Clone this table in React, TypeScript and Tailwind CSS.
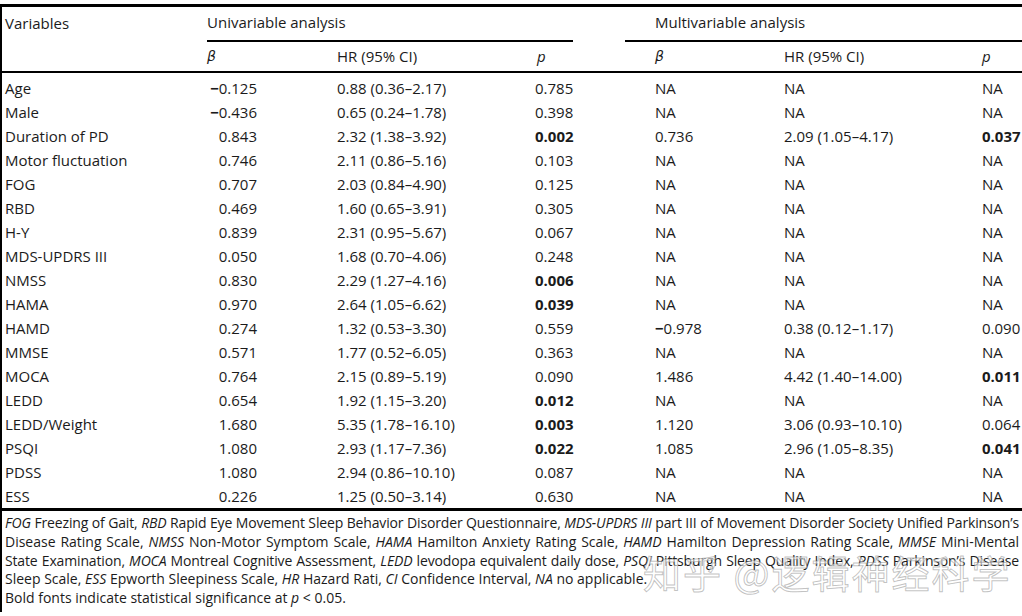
import React from "react";

type Row = {
  name: string;
  ub: string;
  uhr: string;
  up: string;
  upBold?: boolean;
  mb: string;
  mhr: string;
  mp: string;
  mpBold?: boolean;
};

const rows: Row[] = [
  { name: "Age", ub: "−0.125", uhr: "0.88 (0.36–2.17)", up: "0.785", mb: "NA", mhr: "NA", mp: "NA" },
  { name: "Male", ub: "−0.436", uhr: "0.65 (0.24–1.78)", up: "0.398", mb: "NA", mhr: "NA", mp: "NA" },
  { name: "Duration of PD", ub: "0.843", uhr: "2.32 (1.38–3.92)", up: "0.002", upBold: true, mb: "0.736", mhr: "2.09 (1.05–4.17)", mp: "0.037", mpBold: true },
  { name: "Motor fluctuation", ub: "0.746", uhr: "2.11 (0.86–5.16)", up: "0.103", mb: "NA", mhr: "NA", mp: "NA" },
  { name: "FOG", ub: "0.707", uhr: "2.03 (0.84–4.90)", up: "0.125", mb: "NA", mhr: "NA", mp: "NA" },
  { name: "RBD", ub: "0.469", uhr: "1.60 (0.65–3.91)", up: "0.305", mb: "NA", mhr: "NA", mp: "NA" },
  { name: "H-Y", ub: "0.839", uhr: "2.31 (0.95–5.67)", up: "0.067", mb: "NA", mhr: "NA", mp: "NA" },
  { name: "MDS-UPDRS III", ub: "0.050", uhr: "1.68 (0.70–4.06)", up: "0.248", mb: "NA", mhr: "NA", mp: "NA" },
  { name: "NMSS", ub: "0.830", uhr: "2.29 (1.27–4.16)", up: "0.006", upBold: true, mb: "NA", mhr: "NA", mp: "NA" },
  { name: "HAMA", ub: "0.970", uhr: "2.64 (1.05–6.62)", up: "0.039", upBold: true, mb: "NA", mhr: "NA", mp: "NA" },
  { name: "HAMD", ub: "0.274", uhr: "1.32 (0.53–3.30)", up: "0.559", mb: "−0.978", mhr: "0.38 (0.12–1.17)", mp: "0.090" },
  { name: "MMSE", ub: "0.571", uhr: "1.77 (0.52–6.05)", up: "0.363", mb: "NA", mhr: "NA", mp: "NA" },
  { name: "MOCA", ub: "0.764", uhr: "2.15 (0.89–5.19)", up: "0.090", mb: "1.486", mhr: "4.42 (1.40–14.00)", mp: "0.011", mpBold: true },
  { name: "LEDD", ub: "0.654", uhr: "1.92 (1.15–3.20)", up: "0.012", upBold: true, mb: "NA", mhr: "NA", mp: "NA" },
  { name: "LEDD/Weight", ub: "1.680", uhr: "5.35 (1.78–16.10)", up: "0.003", upBold: true, mb: "1.120", mhr: "3.06 (0.93–10.10)", mp: "0.064" },
  { name: "PSQI", ub: "1.080", uhr: "2.93 (1.17–7.36)", up: "0.022", upBold: true, mb: "1.085", mhr: "2.96 (1.05–8.35)", mp: "0.041", mpBold: true },
  { name: "PDSS", ub: "1.080", uhr: "2.94 (0.86–10.10)", up: "0.087", mb: "NA", mhr: "NA", mp: "NA" },
  { name: "ESS", ub: "0.226", uhr: "1.25 (0.50–3.14)", up: "0.630", mb: "NA", mhr: "NA", mp: "NA" },
];

const cols = "grid grid-cols-[207px_130px_198px_120px_129px_198px_1fr]";

function Neg({ v }: { v: string }) {
  // the minus sign in the source is heavier than the digits
  if (v.startsWith("−")) {
    return (
      <>
        <span className="font-bold">−</span>
        {v.slice(1)}
      </>
    );
  }
  return <>{v}</>;
}

function Justified({ tight, children }: { tight?: boolean; children: React.ReactNode }) {
  return (
    <div
      className={`whitespace-nowrap text-justify [text-align-last:justify] ${
        tight ? "tracking-[-0.15px] [word-spacing:-1.5px]" : ""
      }`}
    >
      {children}
    </div>
  );
}

export default function App() {
  return (
    <div className="relative w-[1022px] h-[616px] bg-white text-[#1b1b1b] font-['Open_Sans',sans-serif] overflow-hidden">
      <div className="absolute left-0 top-[4px] bottom-[4px] w-[2px] bg-black" />
      <div className="pt-[4px]">
        <div className="h-[3px] bg-black" />

        {/* header row 1 */}
        <div className="flex text-[15px] h-[35px] items-center">
          <div className="w-[207px] pl-[5px] pb-[3px]">Variables</div>
          <div className="w-[366px] border-b-2 border-black h-full flex items-center pb-[3px]">Univariable analysis</div>
          <div className="w-[52px]" />
          <div className="flex-1 border-b-2 border-black h-full flex items-center pl-[30px] pb-[3px]">Multivariable analysis</div>
        </div>

        {/* header row 2 */}
        <div className={`${cols} text-[15px] h-[31px] items-center border-b-2 border-black`}>
          <div />
          <div className="italic font-['DejaVu_Sans',sans-serif] text-[14px]">β</div>
          <div>HR (95% CI)</div>
          <div className="italic pl-[2px]">p</div>
          <div className="italic font-['DejaVu_Sans',sans-serif] text-[14px]">β</div>
          <div>HR (95% CI)</div>
          <div className="italic">p</div>
        </div>

        <div className="pt-[3px]">
          {rows.map((r) => (
            <div key={r.name} className={`${cols} text-[15px] h-[24px] items-center`}>
              <div className="pl-[5px]">{r.name}</div>
              <div>
                <div className="w-[50px] text-right">
                  <Neg v={r.ub} />
                </div>
              </div>
              <div>{r.uhr}</div>
              <div>
                <div className={`w-[38px] text-right ${r.upBold ? "font-bold" : ""}`}>{r.up}</div>
              </div>
              <div>
                <Neg v={r.mb} />
              </div>
              <div>{r.mhr}</div>
              <div className={r.mpBold ? "font-bold" : ""}>{r.mp}</div>
            </div>
          ))}
        </div>

        <div className="h-[3px] bg-black" />

        {/* footnote */}
        <div className="pl-[5px] pr-[3px] pt-[3px] text-[14px] leading-[18.75px]">
          <Justified tight>
            <i>FOG</i> Freezing of Gait, <i>RBD</i> Rapid Eye Movement Sleep Behavior Disorder Questionnaire, <i>MDS-UPDRS III</i> part III of Movement Disorder Society Unified Parkinson’s
          </Justified>
          <Justified>
            Disease Rating Scale, <i>NMSS</i> Non-Motor Symptom Scale, <i>HAMA</i> Hamilton Anxiety Rating Scale, <i>HAMD</i> Hamilton Depression Rating Scale, <i>MMSE</i> Mini-Mental
          </Justified>
          <Justified tight>
            State Examination, <i>MOCA</i> Montreal Cognitive Assessment, <i>LEDD</i> levodopa equivalent daily dose, <i>PSQI</i> Pittsburgh Sleep Quality Index, <i>PDSS</i> Parkinson’s Disease
          </Justified>
          <div className="whitespace-nowrap">
            Sleep Scale, <i>ESS</i> Epworth Sleepiness Scale, <i>HR</i> Hazard Rati, <i>CI</i> Confidence Interval, <i>NA</i> no applicable.
          </div>
          <div className="whitespace-nowrap">
            Bold fonts indicate statistical significance at <i>p</i> &lt; 0.05.
          </div>
        </div>
      </div>

      {/* watermark */}
      <div className="absolute left-[643px] top-[553px] text-[38px] leading-none tracking-[2px] text-white/60 [-webkit-text-stroke:1px_rgba(120,120,120,0.45)] font-['Noto_Sans_CJK_SC',sans-serif] whitespace-nowrap">
        知乎 @逻辑神经科学
      </div>
    </div>
  );
}
